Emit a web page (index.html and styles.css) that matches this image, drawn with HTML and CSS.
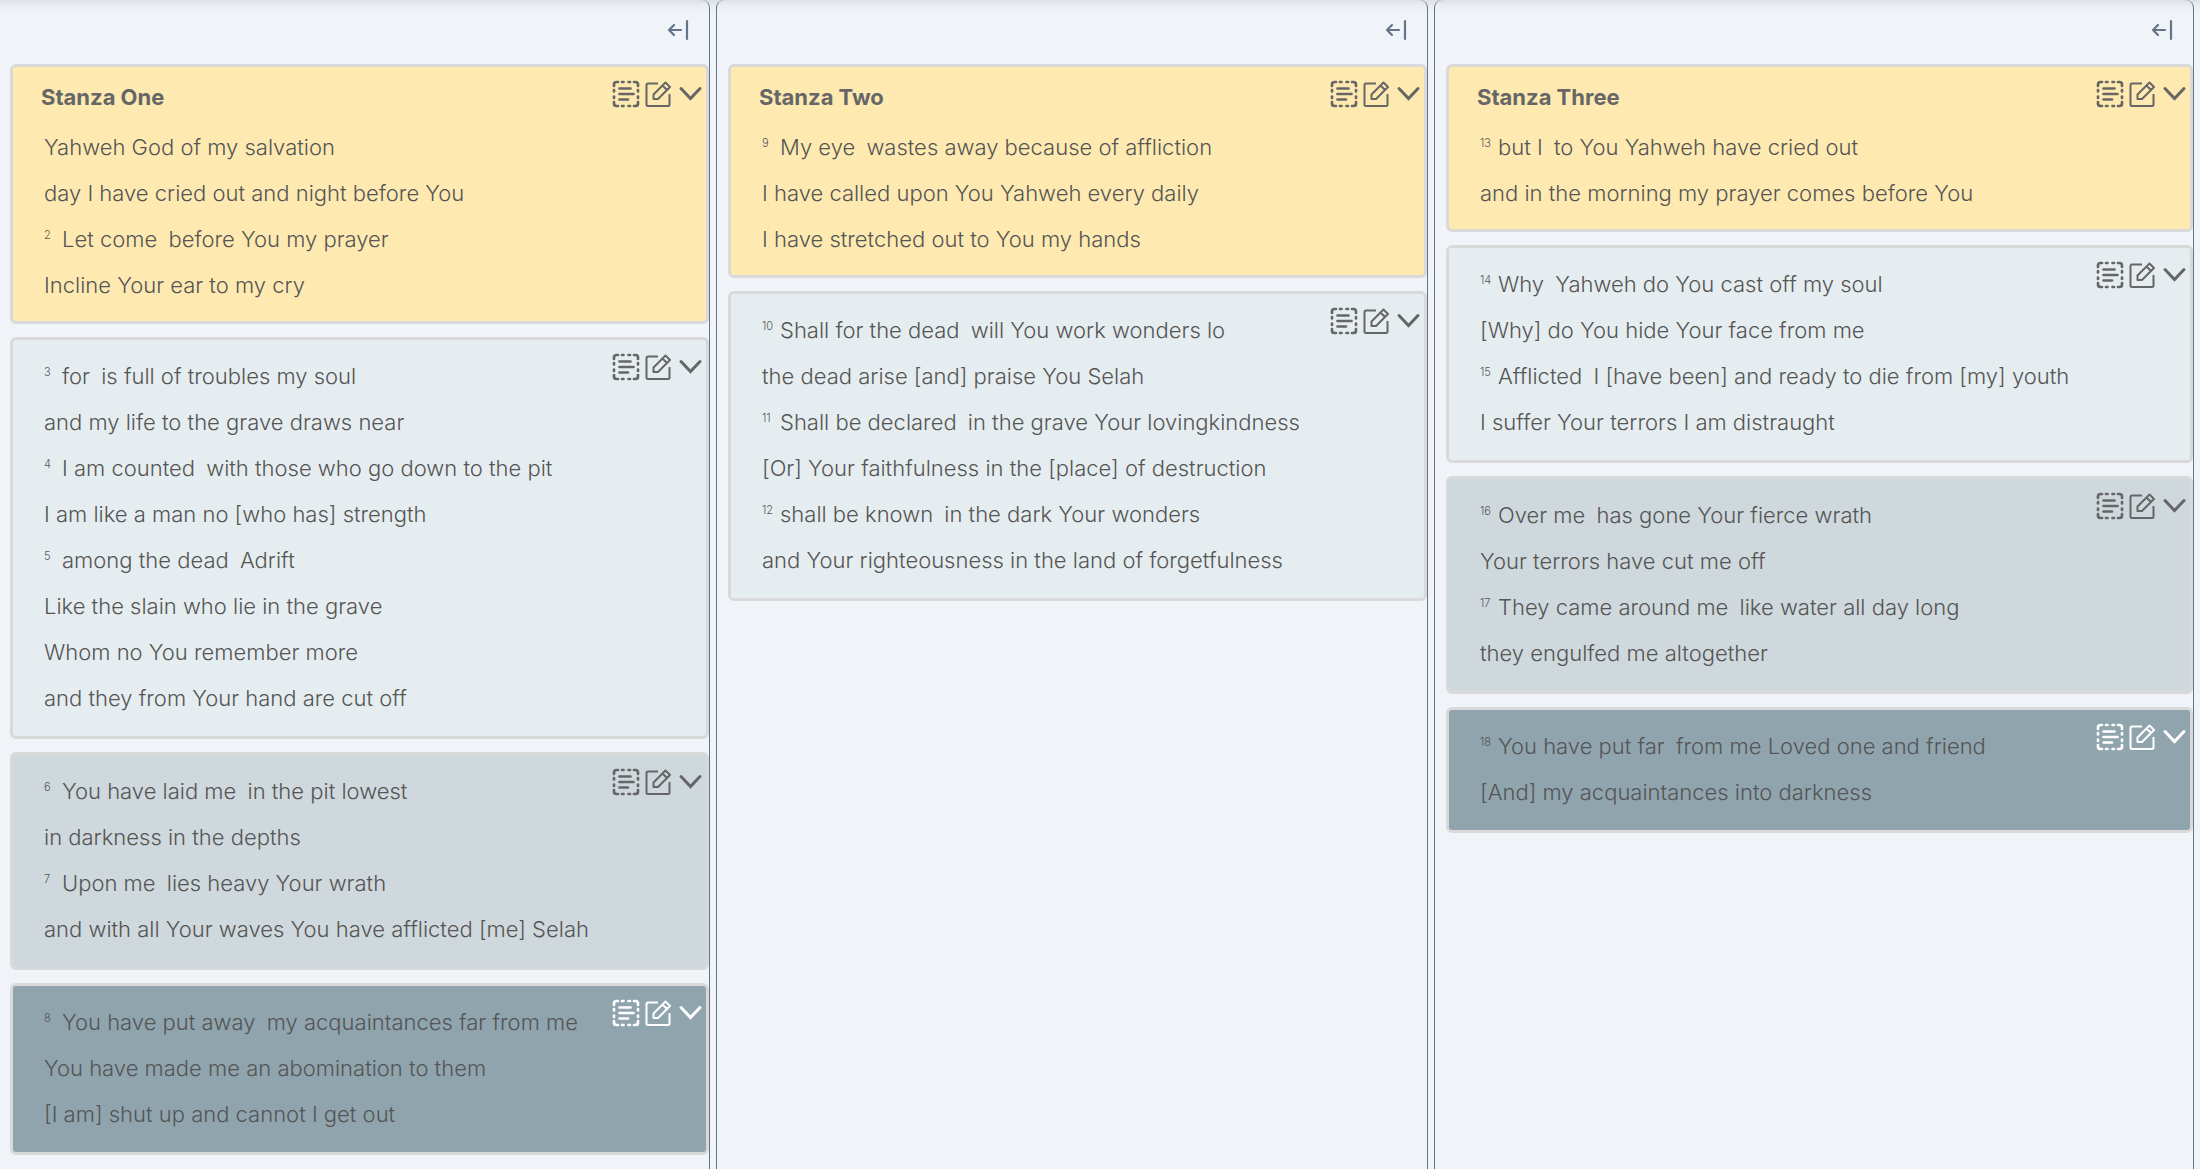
FILE: index.html
```html
<!DOCTYPE html>
<html lang="en">
<head>
<meta charset="utf-8">
<title>Psalm 88</title>
<link rel="stylesheet" href="styles.css">
</head>
<body>
<svg class="sprite" aria-hidden="true">
  <symbol id="note" viewBox="0 0 28 28">
    <path d="M2 6V4.500Q2 2 4.500 2H6M22 2H23.500Q26 2 26 4.500V6M26 22V23.500Q26 26 23.500 26H22M6 26H4.500Q2 26 2 23.500V22M10 2H11.500M16.500 2H18M10 26H11.500M16.500 26H18M2 10V11.500M2 16.500V18M26 10V11.500M26 16.500V18M7.500 8.500H18.500M7.500 14H21.500M7.500 19.500H16" fill="none" stroke="currentColor" stroke-width="2.700" stroke-linecap="round"/>
  </symbol>
  <symbol id="edit" viewBox="0 0 28 28">
    <path d="M14 3.500H4Q2.500 3.500 2.500 5V24.500Q2.500 26 4 26H24Q25.500 26 25.500 24.500V14M9.500 19V14.500L21.500 2.500L26 7L14 19ZM18.500 5.500L23 10" fill="none" stroke="currentColor" stroke-width="2" stroke-linejoin="round"/>
  </symbol>
  <symbol id="chevron" viewBox="0 0 28 28">
    <path d="M5 8.500L14.500 18.500L24 8.500" fill="none" stroke="currentColor" stroke-width="3" stroke-linecap="round"/>
  </symbol>
  <symbol id="collapse" viewBox="0 0 22 22">
    <path d="M14 11H2M7 6L2 11L7 16M20 2V20" fill="none" stroke="currentColor" stroke-width="2.200" stroke-linecap="round" stroke-linejoin="round"/>
  </symbol>
</svg>
<main class="board">
  <section class="stanza">
    <header class="stanza-bar"><button class="icon-button small" type="button" aria-label="Collapse stanza"><svg><use href="#collapse"/></svg></button></header>
    <article class="strophe yellow">
      <div class="poem">
        <h2>Stanza One</h2>
        <p>Yahweh God of my salvation</p>
        <p>day I have cried out and night before You</p>
        <p><sup>2</sup>Let come <span class="word">before</span> You my prayer</p>
        <p>Incline Your ear to my cry</p>
      </div>
      <div class="tools"><button class="icon-button" type="button" aria-label="Notes"><svg><use href="#note"/></svg></button><button class="icon-button" type="button" aria-label="Edit"><svg><use href="#edit"/></svg></button><button class="icon-button" type="button" aria-label="Collapse"><svg><use href="#chevron"/></svg></button></div>
    </article>
    <article class="strophe mist">
      <div class="poem">
        <p><sup>3</sup>for <span class="word">is</span> full of troubles my soul</p>
        <p>and my life to the grave draws near</p>
        <p><sup>4</sup>I am counted <span class="word">with</span> those who go down to the pit</p>
        <p>I am like a man no [who has] strength</p>
        <p><sup>5</sup>among the dead <span class="word">Adrift</span></p>
        <p>Like the slain who lie in the grave</p>
        <p>Whom no You remember more</p>
        <p>and they from Your hand are cut off</p>
      </div>
      <div class="tools"><button class="icon-button" type="button" aria-label="Notes"><svg><use href="#note"/></svg></button><button class="icon-button" type="button" aria-label="Edit"><svg><use href="#edit"/></svg></button><button class="icon-button" type="button" aria-label="Collapse"><svg><use href="#chevron"/></svg></button></div>
    </article>
    <article class="strophe cloud">
      <div class="poem">
        <p><sup>6</sup>You have laid me <span class="word">in</span> the pit lowest</p>
        <p>in darkness in the depths</p>
        <p><sup>7</sup>Upon me <span class="word">lies</span> heavy Your wrath</p>
        <p>and with all Your waves You have afflicted [me] Selah</p>
      </div>
      <div class="tools"><button class="icon-button" type="button" aria-label="Notes"><svg><use href="#note"/></svg></button><button class="icon-button" type="button" aria-label="Edit"><svg><use href="#edit"/></svg></button><button class="icon-button" type="button" aria-label="Collapse"><svg><use href="#chevron"/></svg></button></div>
    </article>
    <article class="strophe slate">
      <div class="poem">
        <p><sup>8</sup>You have put away <span class="word">my</span> acquaintances far from me</p>
        <p>You have made me an abomination to them</p>
        <p>[I am] shut up and cannot I get out</p>
      </div>
      <div class="tools"><button class="icon-button" type="button" aria-label="Notes"><svg><use href="#note"/></svg></button><button class="icon-button" type="button" aria-label="Edit"><svg><use href="#edit"/></svg></button><button class="icon-button" type="button" aria-label="Collapse"><svg><use href="#chevron"/></svg></button></div>
    </article>
  </section>

  <section class="stanza">
    <header class="stanza-bar"><button class="icon-button small" type="button" aria-label="Collapse stanza"><svg><use href="#collapse"/></svg></button></header>
    <article class="strophe yellow">
      <div class="poem">
        <h2>Stanza Two</h2>
        <p><sup>9</sup>My eye <span class="word">wastes</span> away because of affliction</p>
        <p>I have called upon You Yahweh every daily</p>
        <p>I have stretched out to You my hands</p>
      </div>
      <div class="tools"><button class="icon-button" type="button" aria-label="Notes"><svg><use href="#note"/></svg></button><button class="icon-button" type="button" aria-label="Edit"><svg><use href="#edit"/></svg></button><button class="icon-button" type="button" aria-label="Collapse"><svg><use href="#chevron"/></svg></button></div>
    </article>
    <article class="strophe mist">
      <div class="poem">
        <p><sup>10</sup>Shall for the dead <span class="word">will</span> You work wonders lo</p>
        <p>the dead arise [and] praise You Selah</p>
        <p><sup>11</sup>Shall be declared <span class="word">in</span> the grave Your lovingkindness</p>
        <p>[Or] Your faithfulness in the [place] of destruction</p>
        <p><sup>12</sup>shall be known <span class="word">in</span> the dark Your wonders</p>
        <p>and Your righteousness in the land of forgetfulness</p>
      </div>
      <div class="tools"><button class="icon-button" type="button" aria-label="Notes"><svg><use href="#note"/></svg></button><button class="icon-button" type="button" aria-label="Edit"><svg><use href="#edit"/></svg></button><button class="icon-button" type="button" aria-label="Collapse"><svg><use href="#chevron"/></svg></button></div>
    </article>
  </section>

  <section class="stanza">
    <header class="stanza-bar"><button class="icon-button small" type="button" aria-label="Collapse stanza"><svg><use href="#collapse"/></svg></button></header>
    <article class="strophe yellow">
      <div class="poem">
        <h2>Stanza Three</h2>
        <p><sup>13</sup>but I <span class="word">to</span> You Yahweh have cried out</p>
        <p>and in the morning my prayer comes before You</p>
      </div>
      <div class="tools"><button class="icon-button" type="button" aria-label="Notes"><svg><use href="#note"/></svg></button><button class="icon-button" type="button" aria-label="Edit"><svg><use href="#edit"/></svg></button><button class="icon-button" type="button" aria-label="Collapse"><svg><use href="#chevron"/></svg></button></div>
    </article>
    <article class="strophe mist">
      <div class="poem">
        <p><sup>14</sup>Why <span class="word">Yahweh</span> do You cast off my soul</p>
        <p>[Why] do You hide Your face from me</p>
        <p><sup>15</sup>Afflicted <span class="word">I</span> [have been] and ready to die from [my] youth</p>
        <p>I suffer Your terrors I am distraught</p>
      </div>
      <div class="tools"><button class="icon-button" type="button" aria-label="Notes"><svg><use href="#note"/></svg></button><button class="icon-button" type="button" aria-label="Edit"><svg><use href="#edit"/></svg></button><button class="icon-button" type="button" aria-label="Collapse"><svg><use href="#chevron"/></svg></button></div>
    </article>
    <article class="strophe cloud">
      <div class="poem">
        <p><sup>16</sup>Over me <span class="word">has</span> gone Your fierce wrath</p>
        <p>Your terrors have cut me off</p>
        <p><sup>17</sup>They came around me <span class="word">like</span> water all day long</p>
        <p>they engulfed me altogether</p>
      </div>
      <div class="tools"><button class="icon-button" type="button" aria-label="Notes"><svg><use href="#note"/></svg></button><button class="icon-button" type="button" aria-label="Edit"><svg><use href="#edit"/></svg></button><button class="icon-button" type="button" aria-label="Collapse"><svg><use href="#chevron"/></svg></button></div>
    </article>
    <article class="strophe slate">
      <div class="poem">
        <p><sup>18</sup>You have put far <span class="word">from</span> me Loved one and friend</p>
        <p>[And] my acquaintances into darkness</p>
      </div>
      <div class="tools"><button class="icon-button" type="button" aria-label="Notes"><svg><use href="#note"/></svg></button><button class="icon-button" type="button" aria-label="Edit"><svg><use href="#edit"/></svg></button><button class="icon-button" type="button" aria-label="Collapse"><svg><use href="#chevron"/></svg></button></div>
    </article>
  </section>
</main>
</body>
</html>
```
FILE: styles.css
```css
* {
  box-sizing: border-box;
}

body {
  margin: 0;
  background: #f0f4f9;
  color: #555;
  font: 300 22px/46px Inter, "Liberation Sans", sans-serif;
}

.sprite {
  display: none;
}

.board {
  display: grid;
  grid-template-columns: 710fr 712fr 760fr;
  gap: 6px;
  min-height: 100vh;
  padding-right: 6px;
  background: linear-gradient(#dcdfe5, #e9edf2 5px, #f0f4f9 14px) top / 100% 14px no-repeat;
}

.stanza {
  display: flex;
  flex-direction: column;
  gap: 13px;
  padding-left: 11px;
  border: solid #64748b;
  border-width: 0 1px;
  border-radius: 8px 8px 0 0;
}

.stanza:first-child {
  padding-left: 10px;
  border-left: 0;
}

.stanza-bar {
  display: flex;
  justify-content: flex-end;
  height: 51px;
  padding: 19px 20px 0 0;
  color: #64748b;
}

.strophe {
  display: flex;
  justify-content: space-between;
  padding: 13px 0 15px;
  border: 3px solid #d9d9d9;
  border-radius: 6px;
}

.yellow {
  background: #feeab1;
}

.mist {
  background: #e6edf0;
}

.cloud {
  background: #cfd8dc;
}

.slate {
  background: #90a4ae;
}

.poem {
  padding-left: 31px;
}

h2 {
  margin: 0 0 10px -3px;
  color: #666;
  font-size: 22px;
  font-weight: 700;
  line-height: 34px;
}

.yellow p:last-child {
  margin-bottom: -2px;
}

p {
  margin: 0;
  white-space: nowrap;
}

sup {
  display: inline-block;
  width: 18px;
  font-size: 11px;
  line-height: 11px;
  vertical-align: 8px;
}

.word {
  margin-left: 5px;
}

.tools {
  display: flex;
  gap: 4px;
  height: 28px;
  padding-right: 2px;
  color: #666;
}

.slate .tools {
  color: #fff;
}

.icon-button {
  display: block;
  width: 28px;
  height: 28px;
  padding: 0;
  border: 0;
  background: none;
  color: inherit;
}

.small {
  width: 22px;
  height: 22px;
}

.icon-button svg {
  display: block;
  width: 100%;
  height: 100%;
}
```
